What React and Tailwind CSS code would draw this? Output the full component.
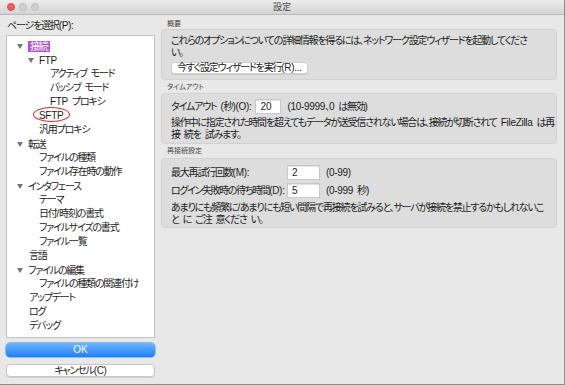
import React from 'react';

const FONT = { fontFamily: '"Liberation Sans", "Noto Sans CJK JP", sans-serif', fontFeatureSettings: '"palt"' };

const TREE = [
  { label: '接続', level: 0, open: true, selected: true },
  { label: 'FTP', level: 1, open: true },
  { label: 'アクティブ モード', level: 2 },
  { label: 'パッシブ モード', level: 2 },
  { label: 'FTP プロキシ', level: 2 },
  { label: 'SFTP', level: 1, circled: true },
  { label: '汎用プロキシ', level: 1 },
  { label: '転送', level: 0, open: true },
  { label: 'ファイルの種類', level: 1 },
  { label: 'ファイル存在時の動作', level: 1 },
  { label: 'インタフェース', level: 0, open: true },
  { label: 'テーマ', level: 1 },
  { label: '日付/時刻の書式', level: 1 },
  { label: 'ファイルサイズの書式', level: 1 },
  { label: 'ファイル一覧', level: 1 },
  { label: '言語', level: 0 },
  { label: 'ファイルの編集', level: 0, open: true },
  { label: 'ファイルの種類の関連付け', level: 1 },
  { label: 'アップデート', level: 0 },
  { label: 'ログ', level: 0 },
  { label: 'デバッグ', level: 0 },
];

const TEXT_PAD = ['pl-[22px]', 'pl-[32px]', 'pl-[43px]'];
const ARROW_PAD = ['ml-[10px] w-[11px]', 'ml-[21px] w-[11px]'];

// japanese glyphs get squeezed, latin runs keep near-normal spacing
function T({ s }) {
  return s.split(/([\x20-\x7e]+)/).map((part, i) =>
    i % 2 ? <span key={i} className="tracking-[-0.3px] [word-spacing:1.5px]">{part}</span> : part
  );
}

function Arrow() {
  return (
    <svg width="6" height="5" viewBox="0 0 6 5">
      <path d="M0 0 L6 0 L3 5 Z" fill="#777" />
    </svg>
  );
}

function TreeRow({ item }) {
  if (item.open) {
    return (
      <div className="flex items-center h-[14px]">
        <span className={`${ARROW_PAD[item.level]} flex items-center`}><Arrow /></span>
        {item.selected ? (
          <span className="bg-[#b350d4] text-white px-[2px] h-[11px] leading-[11px]">{item.label}</span>
        ) : (
          <span><T s={item.label} /></span>
        )}
      </div>
    );
  }
  return (
    <div className={`flex items-center h-[14px] ${TEXT_PAD[item.level]}`}>
      <span className="relative leading-[14px]">
        <T s={item.label} />
        {item.circled && (
          <span className="absolute left-[-6px] top-[-2px] w-[37px] h-[15px] rounded-[50%] border-[1.5px] border-[#e2281d]" />
        )}
      </span>
    </div>
  );
}

function Field({ value, width }) {
  return (
    <div className={`${width} h-[15px] bg-white border border-[#c9c9c9] shadow-[inset_0_1px_0_#e2e2e2] pl-[4px] leading-[13px] tracking-normal shrink-0`}>
      {value}
    </div>
  );
}

export default function App() {
  return (
    <div className="w-[565px] h-[385px] bg-[#8d8d8d] text-[#1c1c1c] text-[10px] tracking-[-1.2px]" style={FONT}>
      <div className="w-[564px] h-[384px] bg-[#e8e8e8] flex flex-col">
        <div className="h-[15px] grid grid-cols-[1fr_auto_1fr] items-center bg-gradient-to-b from-[#ececec] to-[#d4d4d4] border-b border-[#b9b9b9]">
          <div className="flex items-center gap-[4px] pl-[7px]">
            <span className="w-[8px] h-[8px] rounded-full bg-[#fb5b55] border border-[#e2463f]" />
            <span className="w-[8px] h-[8px] rounded-full bg-[#d0d0d0] border border-[#bdbdbd]" />
            <span className="w-[8px] h-[8px] rounded-full bg-[#d0d0d0] border border-[#bdbdbd]" />
          </div>
          <div className="text-[9px] text-[#4a4a4a] leading-[14px] tracking-normal">設定</div>
          <div />
        </div>

        <div className="flex flex-1">
          <div className="w-[149px] ml-[6px] flex flex-col">
            <div className="pt-[5px] pl-[1px] h-[20px] leading-[12px]"><T s="ページを選択(P):" /></div>
            <div className="h-[303px] bg-white border border-[#c3c3c3] pt-[3px]">
              {TREE.map((item) => (
                <TreeRow key={item.label} item={item} />
              ))}
            </div>
            <button className="mt-[5px] h-[14px] rounded-[4px] bg-gradient-to-b from-[#6db4fb] to-[#1b7ffa] text-white leading-[14px] tracking-normal shadow-[0_0_0_0.5px_#3a8ef0]">
              OK
            </button>
            <button className="mt-[7px] h-[13px] rounded-[4px] bg-white border border-[#c6c6c6] leading-[11px] shadow-[0_1px_0_#d0d0d0]">
              <T s="キャンセル(C)" />
            </button>
          </div>

          <div className="w-[396px] ml-[6px] flex flex-col">
            <div className="pt-[3px] leading-[11px] pl-[6px] text-[7px] text-[#444] tracking-normal">概要</div>
            <div className="h-[51px] rounded-[4px] bg-[#dddddd] border border-[#d2d2d2] pt-[5px] pl-[9px]">
              <div className="leading-[12px] whitespace-nowrap">これらのオプションについての詳細情報を得るには、ネットワーク設定ウィザードを起動してくださ</div>
              <div className="leading-[12px]">い。</div>
              <button className="mt-[3px] h-[12px] px-[5px] rounded-[3px] bg-white border border-[#cdcdcd] leading-[10px] shadow-[0_1px_0_#cccccc]">
                <T s="今すぐ設定ウィザードを実行(R)..." />
              </button>
            </div>

            <div className="h-[13px] leading-[13px] pl-[6px] text-[7px] text-[#444] tracking-normal">タイムアウト</div>
            <div className="h-[51px] rounded-[4px] bg-[#dddddd] border border-[#d2d2d2] pt-[5px] pl-[9px]">
              <div className="flex items-center gap-[4px]">
                <span><T s="タイムアウト (秒)(O):" /></span>
                <Field value="20" width="w-[26px]" />
                <span className="ml-[2px]"><T s="(10-9999、0 は無効)" /></span>
              </div>
              <div className="mt-[3px] leading-[12px] whitespace-nowrap"><T s="操作中に指定された時間を超えてもデータが送受信されない場合は、接続が切断されて FileZilla は再" /></div>
              <div className="leading-[12px]"><T s="接 続を 試みます。" /></div>
            </div>

            <div className="h-[14px] leading-[14px] pl-[6px] text-[7px] text-[#444] tracking-normal">再接続設定</div>
            <div className="h-[70px] rounded-[4px] bg-[#dddddd] border border-[#d2d2d2] pt-[6px] pl-[9px]">
              <div className="flex items-center">
                <span className="w-[116px] shrink-0"><T s="最大再試行回数(M):" /></span>
                <Field value="2" width="w-[33px]" />
                <span className="ml-[6px]"><T s="(0-99)" /></span>
              </div>
              <div className="flex items-center mt-[3px]">
                <span className="w-[116px] shrink-0 whitespace-nowrap tracking-[-1.4px]"><T s="ログイン失敗時の待ち時間(D):" /></span>
                <Field value="5" width="w-[33px]" />
                <span className="ml-[6px]"><T s="(0-999 秒)" /></span>
              </div>
              <div className="mt-[4px] leading-[12px] whitespace-nowrap"><T s="あまりにも頻繁に/あまりにも短い間隔で再接続を試みると、サーバが接続を禁止するかもしれないこ" /></div>
              <div className="leading-[11px]"><T s="と に ご注 意くださ い。" /></div>
            </div>
          </div>
        </div>
      </div>
    </div>
  );
}
